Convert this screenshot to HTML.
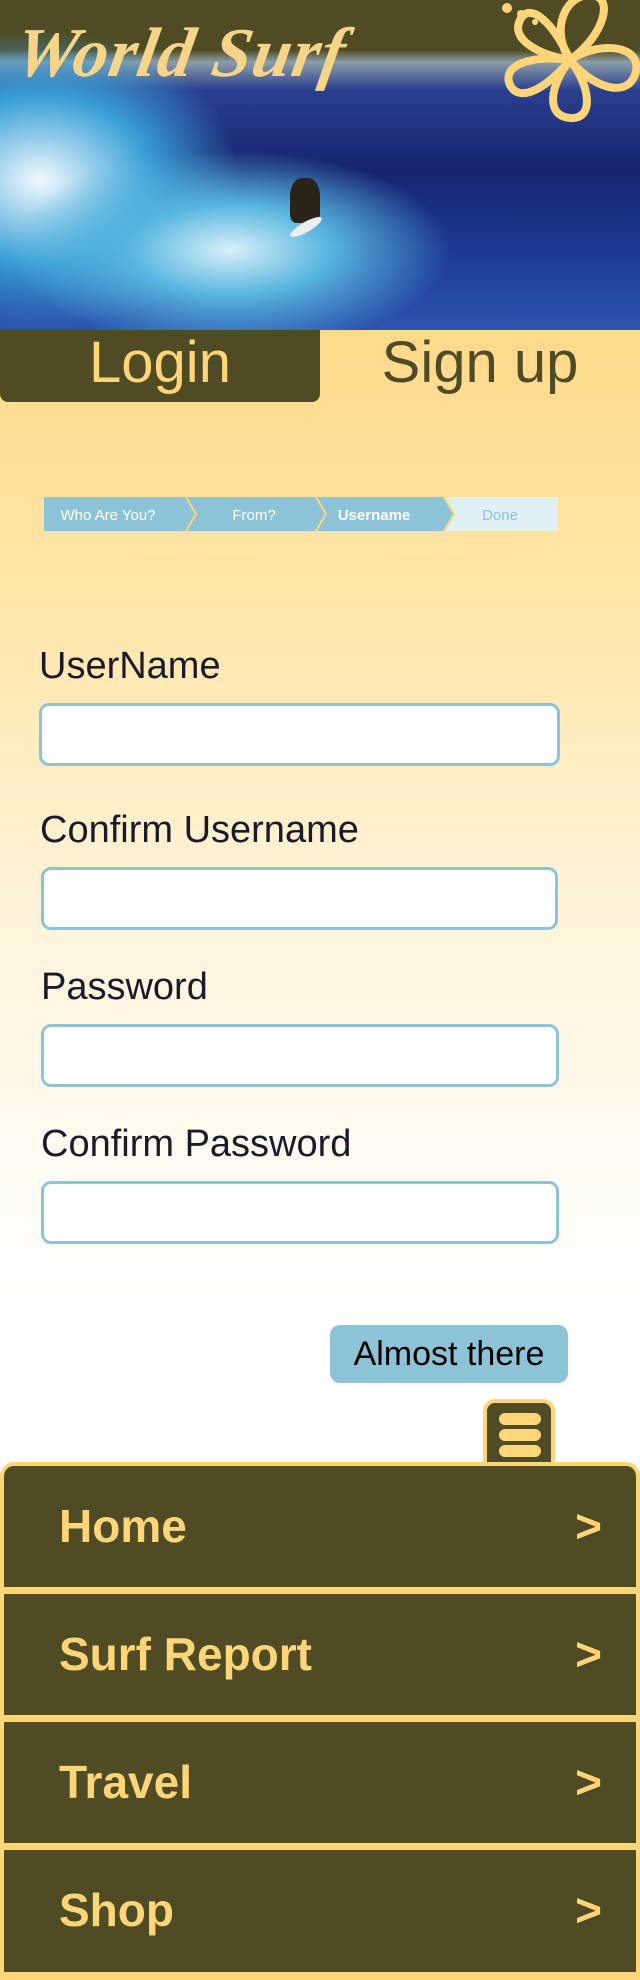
<!DOCTYPE html>
<html><head><meta charset="utf-8"><style>
*{margin:0;padding:0;box-sizing:border-box}
body{width:640px;height:1980px;position:relative;overflow:hidden;font-family:"Liberation Sans",sans-serif;background:linear-gradient(#ffd98a 330px,#ffe6a8 600px,#fff3d9 900px,#fff 1300px)}
.hero{position:absolute;left:0;top:0;width:640px;height:330px;overflow:hidden;
background:radial-gradient(ellipse 220px 100px at 230px 250px,#d8f0f8 0%,#58b6e0 45%,rgba(20,80,160,0) 100%),
radial-gradient(ellipse 200px 150px at 40px 180px,#f2fafd 0%,#3aa0d8 55%,rgba(0,0,0,0) 100%),
linear-gradient(#4f4b24 0,#4f4b24 50px,#8c9da8 62px,#2a3f90 90px,#17246e 170px,#1d3d98 260px,#2d55b0 330px)}
.abs{position:absolute}
.inp{position:absolute;background:#fff;border:3px solid #8cc3d6;border-radius:10px}
.lbl{position:absolute;font-size:38px;color:#1a1a2a}
.row{position:absolute;left:4px;width:632px;height:125px;background:#4f4b24;color:#ffd57a;font-weight:bold;font-size:46px;border-bottom:4px solid #ffd57a}
.row span{position:absolute;left:55px;top:33px}
.row b{position:absolute;right:34px;top:33px}
</style></head><body>
<div class="hero">
 <div class="abs" style="left:290px;top:178px;width:30px;height:45px;background:#2a2418;border-radius:40% 40% 20% 20%"></div>
 <div class="abs" style="left:288px;top:222px;width:36px;height:10px;background:#eee;border-radius:50%;transform:rotate(-30deg)"></div>
 <div class="abs" style="left:16px;top:14px;font-family:'Liberation Serif',serif;font-style:italic;font-weight:bold;font-size:70px;color:#f6d58a;letter-spacing:1px;transform:skewX(-10deg)">World Surf</div>
 <svg class="abs" style="left:495px;top:0" width="145" height="125" viewBox="0 0 145 125"><g fill="none" stroke="#ffd57a" stroke-width="8" stroke-linejoin="round">
 <path d="M75 60 C55 30 70 -5 95 -5 C120 -5 110 35 75 60 C105 40 150 45 140 75 C130 100 95 85 75 60 C95 85 100 120 75 118 C50 116 55 85 75 60 C55 85 25 105 15 85 C5 62 45 55 75 60 C45 55 15 40 25 20 C35 0 60 25 75 60"/></g>
 <circle cx="12" cy="8" r="5" fill="#ffd57a"/><circle cx="26" cy="14" r="4" fill="#ffd57a"/><circle cx="40" cy="22" r="3" fill="#ffd57a"/></svg>
</div>
<div class="abs" style="left:0;top:330px;width:320px;height:72px;background:#4f4b24;border-radius:0 0 8px 8px;color:#ffd57a;font-size:58px;text-align:center;line-height:66px">Login</div>
<div class="abs" style="left:320px;top:330px;width:320px;height:72px;color:#4f4b24;font-size:58px;text-align:center;line-height:66px">Sign up</div>
<svg class="abs" style="left:44px;top:497px" width="514" height="34">
<rect x="0" y="0" width="514" height="34" fill="#e1f0f4"/>
<polygon points="0,0 400,0 410,17 400,34 0,34" fill="#8cc3d6"/>
<g fill="none" stroke="#ffd57a" stroke-width="2"><polyline points="142,0 152,17 142,34"/><polyline points="272,0 282,17 272,34"/><polyline points="400,0 410,17 400,34"/></g>
<g font-family="Liberation Sans" font-size="15" fill="#fff" text-anchor="middle">
<text x="64" y="23">Who Are You?</text><text x="210" y="23">From?</text><text x="330" y="23" font-weight="bold">Username</text><text x="456" y="23" fill="#8cc3d6">Done</text></g></svg>
<div class="lbl" style="left:39px;top:645px">UserName</div>
<div class="inp" style="left:39px;top:703px;width:521px;height:63px"></div>
<div class="lbl" style="left:40px;top:809px">Confirm Username</div>
<div class="inp" style="left:41px;top:867px;width:517px;height:63px"></div>
<div class="lbl" style="left:41px;top:966px">Password</div>
<div class="inp" style="left:41px;top:1024px;width:518px;height:63px"></div>
<div class="lbl" style="left:41px;top:1123px">Confirm Password</div>
<div class="inp" style="left:41px;top:1181px;width:518px;height:63px"></div>
<div class="abs" style="left:330px;top:1325px;width:238px;height:58px;background:#8cc3d6;border-radius:10px;font-size:34px;line-height:58px;text-align:center;color:#000">Almost there</div>
<div class="abs" style="left:483px;top:1399px;width:72px;height:70px;background:#4f4b24;border:4px solid #ffd57a;border-bottom:none;border-radius:12px 12px 0 0">
 <div class="abs" style="left:12px;top:10px;width:42px;height:12px;background:#ffd57a;border-radius:6px"></div>
 <div class="abs" style="left:12px;top:26px;width:42px;height:12px;background:#ffd57a;border-radius:6px"></div>
 <div class="abs" style="left:12px;top:42px;width:42px;height:12px;background:#ffd57a;border-radius:6px"></div>
</div>
<div class="abs" style="left:0;top:1462px;width:640px;height:518px;background:#ffd57a;border-radius:14px 14px 0 0"></div>
<div class="row" style="top:1466px;border-radius:10px 10px 0 0"><span>Home</span><b>&gt;</b></div>
<div class="row" style="top:1594px"><span>Surf Report</span><b>&gt;</b></div>
<div class="row" style="top:1722px"><span>Travel</span><b>&gt;</b></div>
<div class="row" style="top:1850px;height:126px"><span>Shop</span><b>&gt;</b></div>
</body></html>
